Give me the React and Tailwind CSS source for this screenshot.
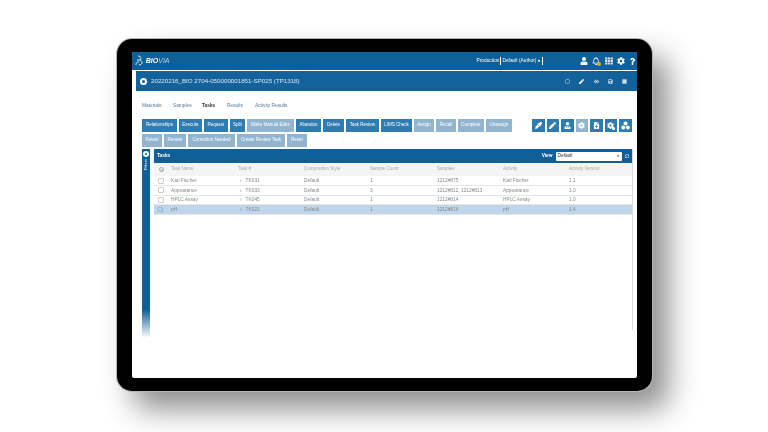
import { FaUser, FaRegBell, FaTh, FaCog, FaQuestion, FaPen, FaEyeDropper, FaUserTie, FaFileMedical, FaEye, FaSave, FaStop, FaRegCircle, FaCaretDown, FaSyncAlt } from "react-icons/fa";
import { Search } from "lucide-react";

const row1 = [
  ["Relationships", "w-[35px]", true],
  ["Execute", "w-[23px]", true],
  ["Request", "w-[24px]", true],
  ["Split", "w-[15px]", true],
  ["Make Manual Edits", "w-[47px]", false],
  ["Abandon", "w-[25px]", true],
  ["Delete", "w-[21px]", true],
  ["Task Review", "w-[33px]", true],
  ["LIMS Check", "w-[31px]", true],
  ["Assign", "w-[20px]", false],
  ["Recall", "w-[20px]", false],
  ["Complete", "w-[26px]", false],
  ["Unassign", "w-[26px]", false],
];

const row2 = [
  ["Retest", "w-[20px]"],
  ["Review", "w-[22px]"],
  ["Correction Needed", "w-[47px]"],
  ["Create Review Task", "w-[48px]"],
  ["Reset", "w-[20px]"],
];

// the last three toolbar icons have no good match in the packs
function GearBadge() {
  return (
    <span className="relative flex">
      <FaCog />
      <span className="absolute right-[-1px] bottom-[-1px] size-[3px] rounded-full bg-white" />
    </span>
  );
}

function Dots() {
  return (
    <svg width="9" height="9" viewBox="0 0 9 9" fill="white">
      <circle cx="4.5" cy="2.4" r="2" />
      <circle cx="2.2" cy="6.4" r="2" />
      <circle cx="6.8" cy="6.4" r="2" />
    </svg>
  );
}

const tools = [
  [FaEyeDropper, true],
  [FaPen, true],
  [FaUserTie, true],
  [FaCog, false],
  [FaFileMedical, true],
  [GearBadge, true],
  [Dots, true],
];

const tasks = [
  ["Karl Fischer", "TK031", "Default", "1", "1212#875", "Karl Fischer", "1.1"],
  ["Appearance", "TK033", "Default", "3", "1212#812, 1212#813", "Appearance", "1.0"],
  ["HPLC Assay", "TK045", "Default", "1", "1212#814", "HPLC Assay", "1.0"],
  ["pH", "TK021", "Default", "1", "1212#816", "pH", "1.4"],
];

const cols = "grid grid-cols-[17px_67px_66px_66px_67px_66px_66px_1fr] items-center";

function Btn({ label, width, on }) {
  return (
    <button className={`${width} h-[13px] shrink-0 text-[4.5px] text-white ${on ? "bg-[#2f7cb3]" : "bg-[#91b4d0]"}`}>
      {label}
    </button>
  );
}

export default function App() {
  return (
    <div className="w-[768px] h-[432px] overflow-hidden bg-white pt-[39px] pl-[117px] font-['Liberation_Sans',sans-serif]">
      <div className="w-[535px] h-[352px] rounded-[15px] bg-black pt-[13px] pl-[15px] shadow-[0_0_0_1px_#b5b5b5,16px_18px_30px_rgba(0,0,0,0.45)]">
        <div className="w-[505px] h-[326px] overflow-hidden rounded-[2px] bg-white blur-[0.6px]">
          <div className="flex h-[18px] items-center bg-[#0f5f99] pl-[3px] pr-[1px] text-white">
            <svg width="10" height="12" viewBox="0 0 10 12" fill="none" stroke="white" strokeWidth="0.9">
              <path d="M3 1 C6 1 7 3 5 5 M2 5 H5 C8 6 8 10 4 10 M1 10 C1 8 2 7 4 7" />
            </svg>
            <span className="ml-[1px] text-[7px] italic">
              <b>BIO</b>
              <span className="text-[#b9d2e6]">VIA</span>
            </span>
            <span className="ml-[307px] flex w-[71px] items-center gap-[1px] text-[4.8px]">
              Production <span className="border-x border-white px-[1px]">Default (Author) ●</span>
            </span>
            <span className="ml-[34px] flex w-[57px] items-center justify-between text-[8px]">
              <FaUser />
              <span className="relative">
                <FaRegBell />
                <span className="absolute right-[-1px] bottom-[-1px] size-[4px] rounded-full bg-[#e9a727]" />
              </span>
              <FaTh className="text-[#d5dee6]" />
              <FaCog />
              <FaQuestion className="text-[7px]" />
            </span>
          </div>

          <div className="mt-[1px] ml-[4px] flex h-[20px] items-center bg-[#14629c] pl-[4px] text-white">
            <span className="flex size-[7px] items-center justify-center rounded-full bg-white">
              <span className="size-[3px] rounded-full bg-[#14629c]" />
            </span>
            <span className="ml-[4px] text-[6.2px] text-[#dbe7f1]">20220216_BIO 2704-050000001851-SP025 (TP1318)</span>
            <span className="ml-auto mr-[10px] flex w-[62px] items-center justify-between text-[5px] text-[#c8dbea]">
              <FaRegCircle />
              <FaPen className="text-white" />
              <FaEye />
              <FaSave />
              <FaStop />
            </span>
          </div>

          <div className="pl-[10px]">
            <div className="mt-[10px] flex h-[10px] items-center text-[4.8px] text-[#5b7a93]">
              <span className="w-[31px]">Materials</span>
              <span className="w-[29px]">Samples</span>
              <span className="w-[25px] font-bold text-[#333]">Tasks</span>
              <span className="w-[28px]">Results</span>
              <span>Activity Results</span>
            </div>

            <div className="mt-[8px] flex items-start">
              <div className="flex w-[390px] gap-[2px]">
                {row1.map(([label, width, on]) => (
                  <Btn key={label} label={label} width={width} on={on} />
                ))}
              </div>
              <div className="flex gap-[2px]">
                {tools.map(([Icon, on], i) => (
                  <span
                    key={i}
                    className={`flex h-[13px] w-[12.5px] items-center justify-center text-[7px] text-white ${on ? "bg-[#2f7cb3]" : "bg-[#91b4d0]"}`}
                  >
                    <Icon />
                  </span>
                ))}
              </div>
            </div>

            <div className="mt-[2px] flex gap-[2px]">
              {row2.map(([label, width]) => (
                <Btn key={label} label={label} width={width} on={false} />
              ))}
            </div>

            <div className="mt-[2px] flex gap-[4px]">
              <div className="flex h-[189px] w-[8px] flex-col items-center bg-linear-to-b from-[#0f5f99] from-85% to-transparent pt-[2px] text-white">
                <span className="flex size-[6px] items-center justify-center rounded-full bg-white">
                  <span className="size-[2px] rounded-full bg-[#0f5f99]" />
                </span>
                <span className="mt-[2px] rotate-180 text-[4px] [writing-mode:vertical-rl]">Filters</span>
              </div>

              <div className="h-[181px] w-[479px] border-r border-[#dcdcdc]">
                <div className="flex h-[14px] items-center bg-[#0f5f99] pl-[3px] text-[4.8px] font-bold text-white">
                  <span>Tasks</span>
                  <span className="ml-auto">View</span>
                  <span className="ml-[3px] flex h-[9px] w-[66px] items-center justify-between rounded-[1px] bg-white px-[2px] font-normal text-[#333]">
                    Default
                    <FaCaretDown className="text-[4px]" />
                  </span>
                  <FaSyncAlt className="mx-[3px] text-[4.5px] text-[#c8dbea]" />
                </div>

                <div className={`${cols} h-[13px] bg-[#f4f4f4] text-[4.5px] text-[#aaa]`}>
                  <span className="ml-[5px] flex size-[5px] items-center justify-center rounded-full border-[0.5px] border-[#aaa]">
                    <span className="size-[2px] rounded-full bg-[#bbb]" />
                  </span>
                  <span>Task Name</span>
                  <span>Task #</span>
                  <span>Composition Style</span>
                  <span>Sample Count</span>
                  <span>Samples</span>
                  <span>Activity</span>
                  <span>Activity Version</span>
                </div>

                {tasks.map((t, i) => (
                  <div
                    key={t[1]}
                    className={`${cols} ${i === 0 ? "h-[10px]" : "h-[9.5px]"} border-b-[0.5px] border-[#e6e6e6] text-[4.8px] text-[#888] ${i === 3 ? "bg-[#bdd6ec]" : "bg-white"}`}
                  >
                    {i === 3 ? (
                      <Search className="ml-[3px] size-[7px] text-[#7f9db5]" />
                    ) : (
                      <span className="ml-[4px] size-[6px] rounded-[1px] border-[0.5px] border-[#ccc] bg-white" />
                    )}
                    <span>{t[0]}</span>
                    <span className="pl-[2px]">›&nbsp;&nbsp;&nbsp;{t[1]}</span>
                    <span>{t[2]}</span>
                    <span>{t[3]}</span>
                    <span>{t[4]}</span>
                    <span>{t[5]}</span>
                    <span>{t[6]}</span>
                  </div>
                ))}
              </div>
            </div>
          </div>
        </div>
      </div>
    </div>
  );
}
